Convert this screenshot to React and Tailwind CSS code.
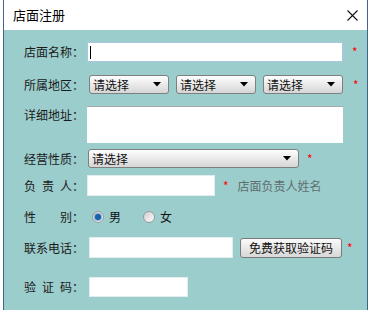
import React from 'react';

const font = { fontFamily: '"Noto Sans CJK SC", "Noto Sans", sans-serif' };

const Label = ({ chars, top }) => (
    <div className={`w-[63px] shrink-0 flex text-[12px] leading-[14px] text-[#1a1a1a] ${top ? 'self-start pt-[2px]' : ''}`}>
        <div className="w-[48px] flex justify-between">
            {chars.map((c, i) => <span key={i}>{c}</span>)}
        </div>
        <span>：</span>
    </div>
);

const Star = ({ ml }) => <span className={`text-[#ff0000] text-[12px] leading-none ${ml}`}>*</span>;

const Select = ({ w }) => (
    <div className={`${w} h-full flex items-center justify-between rounded-[3px] border border-[#7f7f7f] bg-gradient-to-b from-[#fefefe] to-[#d6d6d6] pl-[3px] pr-[7px] text-[12px] text-[#111]`}>
        <span>请选择</span>
        <svg width="8" height="5" viewBox="0 0 8 5"><path d="M0 0h8L4 4.5z" fill="#000" /></svg>
    </div>
);

const Radio = ({ checked }) => (
    <div className="w-[12px] h-[12px] rounded-full border border-[#9a9a9a] bg-gradient-to-br from-[#d0d0d0] to-[#fbfbfb] flex items-center justify-center">
        {checked && <div className="w-[6px] h-[6px] rounded-full bg-[#1a62a8] shadow-[0_0_0_1px_#7fb0dc]" />}
    </div>
);

export default function App() {
    return (
        <div className="w-[378px] h-[310px] bg-white overflow-hidden" style={font}>
            <div className="ml-[3px] w-[365px] h-[310px] border-l border-r border-[#40638f] flex flex-col">
                {/* title bar */}
                <div className="h-[30px] shrink-0 bg-white flex items-center justify-between pl-[9px] pr-[9px]">
                    <span className="text-[13px] text-black">店面注册</span>
                    <svg width="11" height="11" viewBox="0 0 11 11"><path d="M0.5 0.5l10 10M10.5 0.5l-10 10" stroke="#111" strokeWidth="1.1" /></svg>
                </div>

                <div className="flex-1 bg-[#9ccdcd] pl-[20px] flex flex-col">
                    <div className="mt-[12px] h-[20px] flex items-center">
                        <Label chars={['店', '面', '名', '称']} />
                        <div className="w-[256px] h-full bg-white border border-[#a9c6e2] flex items-center pl-[2px]">
                            <div className="w-px h-[13px] bg-black" />
                        </div>
                        <Star ml="ml-[9px]" />
                    </div>

                    <div className="mt-[13px] h-[19px] flex items-center">
                        <Label chars={['所', '属', '地', '区']} />
                        <div className="ml-[2px] h-full flex gap-[7px]">
                            <Select w="w-[80px]" />
                            <Select w="w-[80px]" />
                            <Select w="w-[80px]" />
                        </div>
                        <Star ml="ml-[10px]" />
                    </div>

                    <div className="mt-[12px] h-[37px] flex">
                        <Label chars={['详', '细', '地', '址']} top />
                        <div className="w-[256px] h-full bg-white border-t border-[#a8a8a8]" />
                    </div>

                    <div className="mt-[6px] h-[19px] flex items-center">
                        <Label chars={['经', '营', '性', '质']} />
                        <div className="ml-[1px] h-full flex">
                            <Select w="w-[211px]" />
                        </div>
                        <Star ml="ml-[8px]" />
                    </div>

                    <div className="mt-[7px] h-[21px] flex items-center">
                        <Label chars={['负', '责', '人']} />
                        <div className="w-[128px] h-full bg-white border border-[#e4eded]" />
                        <Star ml="ml-[8px]" />
                        <span className="ml-[9px] text-[12px] text-[#5f6e6e]">店面负责人姓名</span>
                    </div>

                    <div className="mt-[11px] h-[20px] flex items-center">
                        <Label chars={['性', '别']} />
                        <div className="ml-[5px] flex items-center text-[12px] text-[#111]">
                            <Radio checked />
                            <span className="ml-[5px]">男</span>
                            <div className="ml-[22px]"><Radio /></div>
                            <span className="ml-[5px]">女</span>
                        </div>
                    </div>

                    <div className="mt-[10px] h-[21px] flex items-center">
                        <Label chars={['联', '系', '电', '话']} />
                        <div className="ml-[2px] w-[144px] h-full bg-white border border-[#e4eded]" />
                        <button className="ml-[7px] w-[102px] h-[20px] rounded-[3px] border border-[#7a7a7a] bg-gradient-to-b from-[#fafafa] to-[#d8d8d8] text-[12px] text-[#111] leading-none">
                            免费获取验证码
                        </button>
                        <Star ml="ml-[5px]" />
                    </div>

                    <div className="mt-[19px] h-[20px] flex items-center">
                        <Label chars={['验', '证', '码']} />
                        <div className="ml-[2px] w-[99px] h-full bg-white border border-[#e4eded]" />
                    </div>
                </div>
            </div>
        </div>
    );
}
